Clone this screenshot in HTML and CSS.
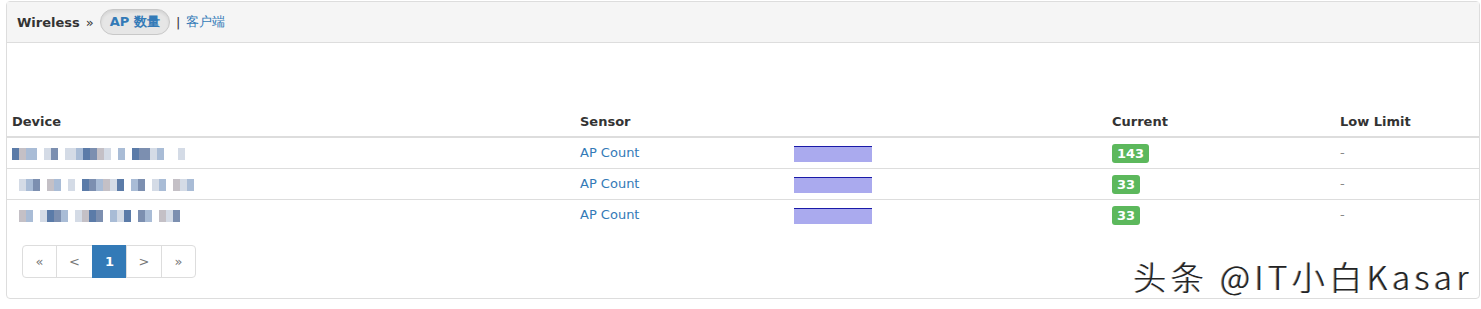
FILE: index.html
```html
<!DOCTYPE html>
<html>
<head>
<meta charset="utf-8">
<link rel="stylesheet" href="styles.css">
</head>
<body>
<div class="panel">
  <div class="panel-heading">
    <span class="crumb">Wireless</span>
    <span class="sep">»</span>
    <span class="pill">AP 数量</span>
    <span class="bar">|</span>
    <a class="link">客户端</a>
  </div>
  <div class="panel-body">
    <div class="spacer"></div>
    <table class="tbl">
      <colgroup>
        <col class="c-dev"><col class="c-sen"><col class="c-graph"><col class="c-cur"><col class="c-low">
      </colgroup>
      <thead>
        <tr><th>Device</th><th>Sensor</th><th></th><th>Current</th><th>Low Limit</th></tr>
      </thead>
      <tbody>
        <tr>
          <td><span class="mosaic"><i class="b1"></i><i class="b5"></i><i class="b2 w"></i><i class="b6"></i><i class="b3"></i><i class="b4"></i><i class="b6"></i><i class="b3 w"></i><i class="b2"></i><i class="b1"></i><i class="b4"></i><i class="b5"></i><i class="b3"></i><i class="b6"></i><i class="b2"></i><i class="b6"></i><i class="b1"></i><i class="b4 w"></i><i class="b3"></i><i class="b2"></i><i class="b6"></i><i class="b6"></i><i class="b3"></i></span></td>
          <td><a class="link">AP Count</a></td>
          <td><span class="mini"></span></td>
          <td><span class="badge">143</span></td>
          <td class="dash">-</td>
        </tr>
        <tr>
          <td><span class="mosaic"><i class="b6"></i><i class="b3"></i><i class="b2"></i><i class="b4"></i><i class="b6"></i><i class="b5"></i><i class="b2"></i><i class="b6"></i><i class="b3"></i><i class="b6"></i><i class="b1"></i><i class="b4"></i><i class="b2"></i><i class="b5"></i><i class="b3"></i><i class="b1"></i><i class="b6"></i><i class="b2"></i><i class="b4"></i><i class="b6"></i><i class="b3"></i><i class="b2"></i><i class="b6"></i><i class="b5"></i><i class="b3"></i><i class="b2"></i></span></td>
          <td><a class="link">AP Count</a></td>
          <td><span class="mini"></span></td>
          <td><span class="badge">33</span></td>
          <td class="dash">-</td>
        </tr>
        <tr>
          <td><span class="mosaic"><i class="b6"></i><i class="b5"></i><i class="b2"></i><i class="b6"></i><i class="b3"></i><i class="b1"></i><i class="b4"></i><i class="b2"></i><i class="b6"></i><i class="b3"></i><i class="b5"></i><i class="b1"></i><i class="b4"></i><i class="b6"></i><i class="b2"></i><i class="b3"></i><i class="b1"></i><i class="b6"></i><i class="b4"></i><i class="b2"></i><i class="b6"></i><i class="b5"></i><i class="b3"></i><i class="b4"></i></span></td>
          <td><a class="link">AP Count</a></td>
          <td><span class="mini"></span></td>
          <td><span class="badge">33</span></td>
          <td class="dash">-</td>
        </tr>
      </tbody>
    </table>
    <ul class="pager">
      <li>«</li><li>&lt;</li><li class="active">1</li><li>&gt;</li><li>»</li>
    </ul>
  </div>
  <div class="watermark">头条 @IT小白Kasar</div>
</div>
</body>
</html>
```

FILE: styles.css
```css
html, body {
  margin: 0;
  padding: 0;
  background: #fff;
  font-family: "DejaVu Sans", Verdana, sans-serif;
  font-size: 13px;
  color: #333;
}
.panel {
  position: relative;
  margin: 1px 0 0 6px;
  width: 1474px;
  border: 1px solid #ddd;
  border-radius: 4px;
  height: 298px;
  box-sizing: border-box;
}
.panel-heading {
  display: flex;
  align-items: center;
  height: 41px;
  box-sizing: border-box;
  padding: 0 10px;
  background: #f5f5f5;
  border-bottom: 1px solid #ddd;
}
.crumb {
  font-weight: bold;
  color: #333;
}
.sep {
  margin: 0 6px 0 6px;
  color: #333;
}
.pill {
  display: inline-flex;
  align-items: center;
  height: 26px;
  box-sizing: border-box;
  padding: 0 9px;
  background: #e6e6e6;
  border: 1px solid #c8c8c8;
  border-radius: 13px;
  color: #337ab7;
  font-weight: bold;
  box-shadow: inset 0 2px 3px rgba(0,0,0,0.08);
}
.bar {
  margin: 0 6px 0 6px;
  color: #333;
}
.link {
  color: #337ab7;
  text-decoration: none;
}
.spacer {
  height: 64px;
}
.tbl {
  width: 1472px;
  border-collapse: collapse;
  table-layout: fixed;
}
.c-dev { width: 568px; }
.c-sen { width: 214px; }
.c-graph { width: 318px; }
.c-cur { width: 228px; }
.c-low { width: 144px; }
.tbl th {
  text-align: left;
  font-weight: bold;
  padding: 5px 5px 4px;
  line-height: 20px;
  border-bottom: 2px solid #ddd;
  color: #333;
}
.tbl td {
  padding: 5px 5px;
  line-height: 20px;
  height: 20px;
  border-top: 1px solid #ddd;
  vertical-align: middle;
}
.tbl tbody tr:first-child td {
  border-top: 0;
}
.mosaic {
  display: inline-flex;
  vertical-align: middle;
  height: 12px;
}
.mosaic i {
  display: block;
  width: 7px;
  height: 12px;
}
.mosaic i.w { width: 11px; }
.b1 { background: #5b7ba8; }
.b2 { background: #a9bcd6; }
.b3 { background: #d4dbe6; }
.b4 { background: #7c8fb0; }
.b5 { background: #c4c0c6; }
.b6 { background: #ffffff; }
.mini {
  display: block;
  width: 78px;
  height: 16px;
  background: #aaaaee;
  border-top: 1px solid #1a1aa8;
  box-sizing: border-box;
  margin-top: 2px;
}
.badge {
  display: inline-block;
  vertical-align: middle;
  background: #5cb85c;
  color: #fff;
  font-weight: bold;
  font-size: 13px;
  line-height: 15px;
  padding: 2px 5px 2px;
  border-radius: 3px;
}
.dash {
  color: #888;
}
.pager {
  display: flex;
  list-style: none;
  margin: 15px 0 0 15px;
  padding: 0;
}
.pager li {
  width: 35px;
  height: 33px;
  box-sizing: border-box;
  display: flex;
  align-items: center;
  justify-content: center;
  border: 1px solid #ddd;
  margin-left: -1px;
  color: #777;
  font-size: 13px;
}
.pager li:nth-child(2) { width: 37px; }
.pager li:nth-child(4) { width: 36px; }
.pager li:first-child {
  margin-left: 0;
  border-radius: 4px 0 0 4px;
}
.pager li:last-child {
  border-radius: 0 4px 4px 0;
}
.pager li.active {
  background: #337ab7;
  border-color: #337ab7;
  color: #fff;
  font-weight: bold;
}
.watermark {
  position: absolute;
  right: 6px;
  top: 256px;
  line-height: 36px;
  font-family: "Noto Sans CJK SC", "DejaVu Sans", sans-serif;
  font-weight: 300;
  font-size: 33px;
  letter-spacing: 4.5px;
  color: #222;
  text-shadow: 1px 1px 0 #fff, -1px 0 0 #888;
}
```
